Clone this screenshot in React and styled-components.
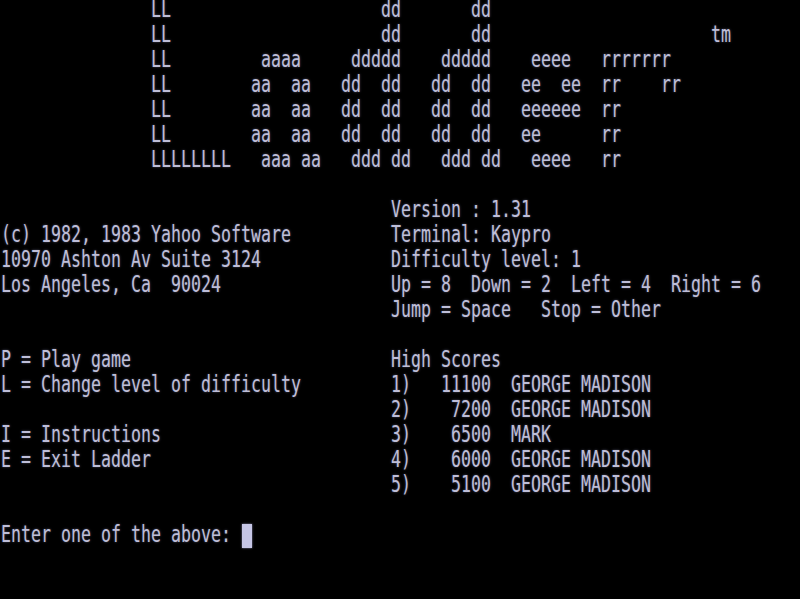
import React from "react";
import styled, { createGlobalStyle } from "styled-components";

const Global = createGlobalStyle`
  html, body { margin: 0; padding: 0; background: #000; }
  body { width: 800px; height: 599px; overflow: hidden; }
`;

const Screen = styled.div`
  width: 800px;
  height: 599px;
  box-sizing: border-box;
  padding-left: 1px;
  background: #000;
  color: #bebed8;
  font-family: "DejaVu Sans Mono", "Liberation Mono", monospace;
  font-size: 16.61px;
  display: flex;
  flex-direction: column;
  overflow: hidden;
`;

const Block = styled.div`
  display: flex;
  flex-direction: column;
  margin-bottom: ${(p) => (p.$gap ? p.$gap * 25 : 0)}px;
`;

const Split = styled.div`
  display: grid;
  grid-template-columns: 390px 1fr;
  margin-bottom: ${(p) => (p.$gap ? p.$gap * 25 : 0)}px;
`;

const Column = styled.div`
  display: flex;
  flex-direction: column;
`;

const Line = styled.div`
  height: 25px;
  display: flex;
  align-items: flex-start;
`;

const Text = styled.span`
  display: block;
  white-space: pre;
  line-height: 15px;
  transform: translateY(-1px) scaleY(1.35);
  transform-origin: 0 0;
  text-shadow: 0 0 2px rgba(180, 180, 230, 0.45);
`;

const Cursor = styled.span`
  display: block;
  width: 10px;
  height: 24px;
  margin-top: -1px;
  margin-left: 1px;
  background: #c6c6e6;
  box-shadow: 0 0 2px rgba(190, 190, 240, 0.7);
`;

// Build a line from [column, text] segments on the 80-column grid.
const place = (segments) => {
  let s = "";
  segments.forEach(([col, txt]) => {
    s = s.padEnd(col, " ") + txt;
  });
  return s;
};

const banner = [
  place([[15, "LL"], [38, "dd"], [47, "dd"]]),
  place([[15, "LL"], [38, "dd"], [47, "dd"], [71, "tm"]]),
  place([[15, "LL"], [26, "aaaa"], [35, "ddddd"], [44, "ddddd"], [53, "eeee"], [60, "rrrrrrr"]]),
  place([[15, "LL"], [25, "aa  aa"], [34, "dd  dd"], [43, "dd  dd"], [52, "ee  ee"], [60, "rr    rr"]]),
  place([[15, "LL"], [25, "aa  aa"], [34, "dd  dd"], [43, "dd  dd"], [52, "eeeeee"], [60, "rr"]]),
  place([[15, "LL"], [25, "aa  aa"], [34, "dd  dd"], [43, "dd  dd"], [52, "ee"], [60, "rr"]]),
  place([[15, "LLLLLLLL"], [26, "aaa aa"], [35, "ddd dd"], [44, "ddd dd"], [53, "eeee"], [60, "rr"]]),
];

const infoLeft = [
  "",
  "(c) 1982, 1983 Yahoo Software",
  "10970 Ashton Av Suite 3124",
  "Los Angeles, Ca  90024",
  "",
];

const infoRight = [
  "Version : 1.31",
  "Terminal: Kaypro",
  "Difficulty level: 1",
  "Up = 8  Down = 2  Left = 4  Right = 6",
  "Jump = Space   Stop = Other",
];

const menu = [
  "P = Play game",
  "L = Change level of difficulty",
  "",
  "I = Instructions",
  "E = Exit Ladder",
  "",
];

const scores = [
  { score: 11100, name: "GEORGE MADISON" },
  { score: 7200, name: "GEORGE MADISON" },
  { score: 6500, name: "MARK" },
  { score: 6000, name: "GEORGE MADISON" },
  { score: 5100, name: "GEORGE MADISON" },
];

const TermLine = ({ children }) => (
  <Line>
    <Text>{children || " "}</Text>
  </Line>
);

export default function App() {
  const scoreLines = [
    "High Scores",
    ...scores.map((s, i) => `${i + 1})   ${String(s.score).padStart(5, " ")}  ${s.name}`),
  ];
  return (
    <>
      <Global />
      <Screen>
        <Block $gap={1}>
          {banner.map((l, i) => (
            <TermLine key={i}>{l}</TermLine>
          ))}
        </Block>
        <Split $gap={1}>
          <Column>
            {infoLeft.map((l, i) => (
              <TermLine key={i}>{l}</TermLine>
            ))}
          </Column>
          <Column>
            {infoRight.map((l, i) => (
              <TermLine key={i}>{l}</TermLine>
            ))}
          </Column>
        </Split>
        <Split $gap={1}>
          <Column>
            {menu.map((l, i) => (
              <TermLine key={i}>{l}</TermLine>
            ))}
          </Column>
          <Column>
            {scoreLines.map((l, i) => (
              <TermLine key={i}>{l}</TermLine>
            ))}
          </Column>
        </Split>
        <Line>
          <Text>{"Enter one of the above: "}</Text>
          <Cursor />
        </Line>
      </Screen>
    </>
  );
}
